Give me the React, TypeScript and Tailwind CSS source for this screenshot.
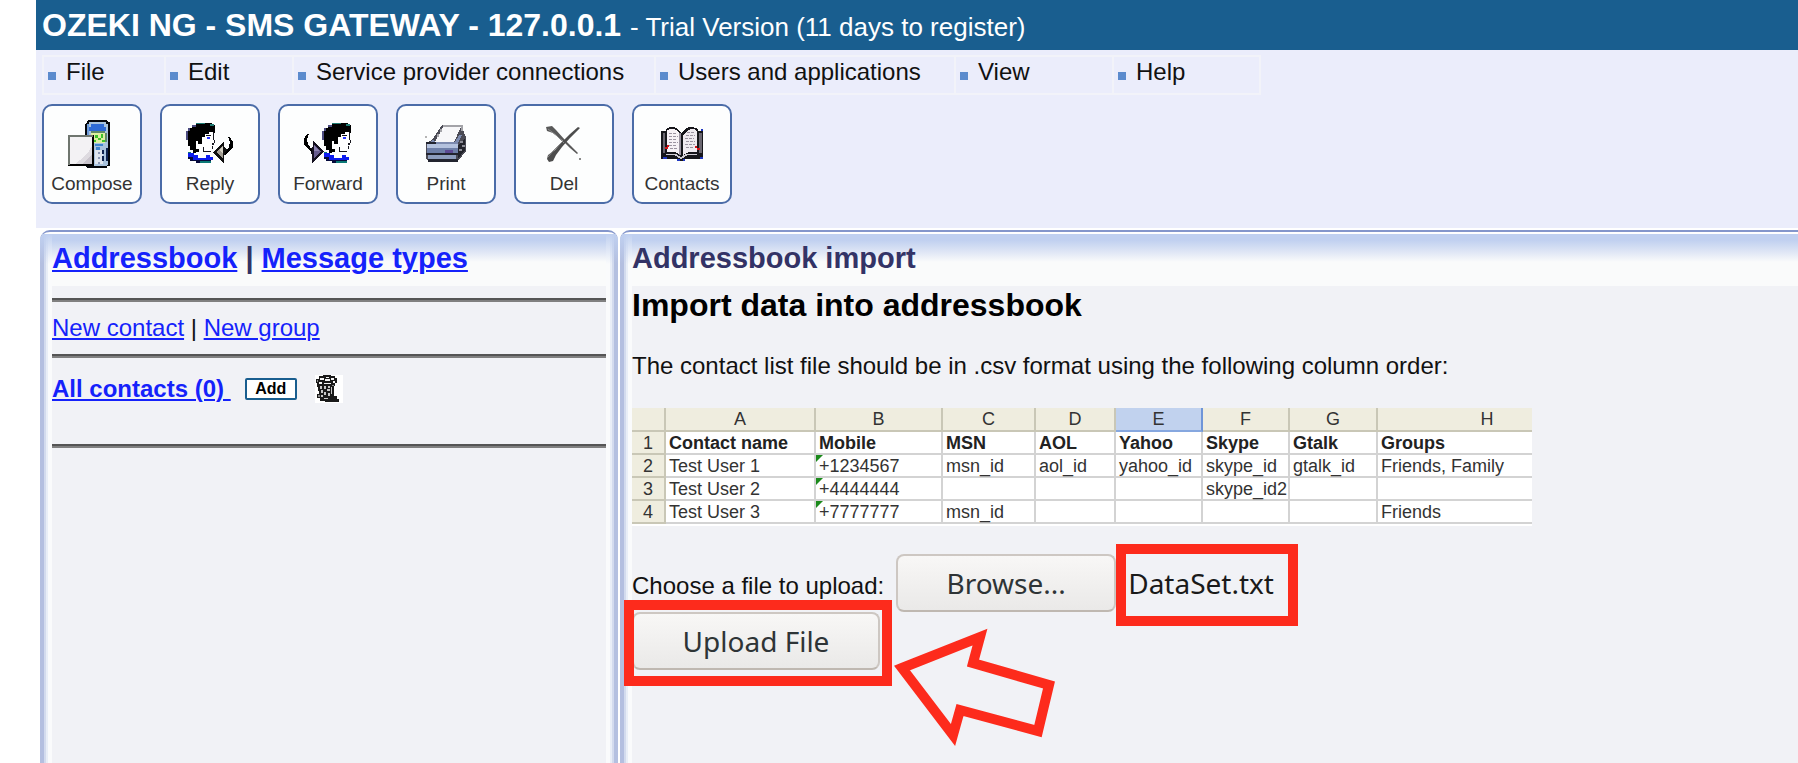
import { useRef, useState } from "react";
import type { ChangeEvent, ReactNode } from "react";

const menuItems = [
  { label: "File", width: "w-[122px]" },
  { label: "Edit", width: "w-[128px]" },
  { label: "Service provider connections", width: "w-[362px]" },
  { label: "Users and applications", width: "w-[300px]" },
  { label: "View", width: "w-[158px]" },
  { label: "Help", width: "w-[147px]" },
];

function ComposeIcon() {
  return (
    <svg width="48" height="48" viewBox="0 0 48 48" shapeRendering="crispEdges" aria-hidden="true">
      <path d="M20 0h18l2 2h2v44h-3v2H20l-3-2V4l2-2z" fill="#05070d" />
      <path d="M21 2h17v2h2v40l-2 2H22l-3-2V4h2z" fill="#a9c3de" />
      <path d="M23 4h13v3h2v4H21V7h2z" fill="#2f6bd6" />
      <path d="M19 4h2v11h-2z" fill="#6f9bd8" />
      <path d="M23 13h14v10H23z" fill="#dcf0a0" />
      <path d="M23 11h14v2H23zM37 13h2v9h-2z" fill="#5f8a68" />
      <path d="M27 15h3v3h-3zM33 14h2v4h-2zM30 18h3v2h-3zM34 20h3v2h-3zM26 20h2v2h-2z" fill="#3fc42a" />
      <path d="M27 24h8v2h-8zM28 27h4v3h-4z" fill="#3f86cf" />
      <path d="M27 30h8v14h-8z" fill="#dfe5ee" />
      <path d="M34 30h2v4h-2zM34 36h2v5h-2zM38 28h2v13h-2z" fill="#10234f" />
      <path d="M30 32h2v2h-2zM30 37h2v2h-2zM30 42h2v2h-2z" fill="#8b97b5" />
      <path d="M0 15h26v31H0z" fill="#000" />
      <path d="M0 15h25v2H2v28H0z" fill="#6f766f" />
      <path d="M2 17h22v27H2z" fill="#f3f2f4" />
      <path d="M24 26v18H7l5-4 7-6z" fill="#dedbe0" />
      <path d="M24 34v10h-9z" fill="#c8c3cb" />
    </svg>
  );
}

function Head() {
  return (
    <>
      <path d="M6 2h4V0h16v2h3v8h-6v3h-4v4h-3v8h-3v4h-3v1H7v-3H4v-4H2v-6H0V8h2V5h4z" fill="#000" />
      <path d="M0 8h2v9H0zM2 5h2v3H2zM6 2h4v2H6z" fill="#4b4b80" />
      <path d="M10 0h9v1h-9zM24 1h4v2h-4z" fill="#1f7a72" />
      <path d="M16 14h3v-3h4V9h4v8h2v3h-2v6h-3v3h-6v6h-6v-5h2v-4h-4v-8h2v3h4z" fill="#fff" />
      <path d="M27 9h1v8h-1zM28 17h1v3h-1zM26 20h2v2h-2zM26 23h1v3h-1zM18 28h7v1h-7zM17 24h1v5h-1z" fill="#17171f" />
      <path d="M21 14h3v2h-3z" fill="#2a35ff" />
      <path d="M20 12h5v1h-5z" fill="#111" />
      <path d="M2 30h6v2h4v3h8v-3h4v2h3v3H7v-3H2z" fill="#0d1cf0" />
      <path d="M2 34h5v3h18v3H10v-2H4v-2H2z" fill="#050a3c" />
      <path d="M14 38h11v2H14z" fill="#0b7a76" />
      <path d="M2 29h3v1H2z" fill="#0b7a76" />
    </>
  );
}

function ReplyIcon() {
  return (
    <svg width="48" height="42" viewBox="0 0 48 42" shapeRendering="crispEdges" aria-hidden="true">
      <Head />
      <path d="M27 29l11-10v5l4 3-4 6v8z" fill="#101010" />
      <path d="M30 29l7-6v12z" fill="#a49f94" />
      <path d="M33 27l4-4v7z" fill="#d6d2c6" />
      <path d="M42 14h2l3 5v5l-4 5-4 3v-2l4-6 1-5z" fill="#000" />
    </svg>
  );
}

function ForwardIcon() {
  return (
    <svg width="48" height="42" viewBox="0 0 48 42" shapeRendering="crispEdges" aria-hidden="true">
      <g transform="translate(18 0)">
        <Head />
      </g>
      <path d="M20 29L9 18v5l-3 3 2 6v8z" fill="#14101f" />
      <path d="M17 29l-7-7v13z" fill="#655a8c" />
      <path d="M15 28l-5-5v5z" fill="#8d83b0" />
      <path d="M5 11H3l-3 5v5l4 5 4 3v-2l-4-6-1-5z" fill="#000" />
    </svg>
  );
}

function PrintIcon() {
  return (
    <svg width="42" height="38" viewBox="0 0 42 38" shapeRendering="crispEdges" aria-hidden="true">
      <path d="M17 0h21v5l3 7v14l-8 10H3l-2-3V18l6-3z" fill="#4b4b55" />
      <path d="M18 2h18l-7 15H10z" fill="#f7f7f9" />
      <path d="M18 0h20v2H18zM15 4h2v3h-2zM12 9h2v3h-2zM36 2h2v4h-2z" fill="#a3a3a8" />
      <path d="M8 14l2 3h20l4-7h3l-5 10H2z" fill="#7c8aae" />
      <path d="M2 19h31v5H2z" fill="#b4c2de" />
      <path d="M2 23h31v5H2z" fill="#6e7fa8" />
      <path d="M3 30h28v4H3z" fill="#8d9dbd" />
      <path d="M1 28h32v2H1zM3 34h30v3H3zM1 17h10v2H1z" fill="#22242f" />
      <path d="M33 20l7-7v12l-7 9z" fill="#22232b" />
      <path d="M35 16h3v2h-3zM37 20h3v2h-3zM34 24h3v2h-3z" fill="#8e8e98" />
      <path d="M20 25h8v3h-8z" fill="#5b4a93" />
      <path d="M0 11h2v2H0z" fill="#b5b5b5" />
    </svg>
  );
}

function DelIcon() {
  return (
    <svg width="38" height="36" viewBox="0 0 38 36" aria-hidden="true">
      <path d="M1 1l6-1 4 4 9 10 6 6 7 7-1 1-7-6-7-7L8 7 2 5z" fill="#595959" />
      <path d="M33 1l2 1-10 10-8 9-6 8-3 6-4 1-2-3 1-4 7-5 7-8 8-8z" fill="#4d4d4d" />
      <path d="M3 31l5-6 9-9M3 3l8 6 8 8" stroke="#8a8a8a" strokeWidth="1" fill="none" />
      <path d="M34 32h2v2h-2z" fill="#8a8a8a" />
    </svg>
  );
}

function ContactsIcon() {
  return (
    <svg width="42" height="34" viewBox="0 0 42 34" shapeRendering="crispEdges" aria-hidden="true">
      <path d="M0 4h5V2l4-2h4l4 2 3 4 4-4 4-2h4l5 2v2h5v28H24v2h-7v-2H0z" fill="#16161b" />
      <path d="M6 3l3-1h4l4 2 3 4v20l-6-3H6z" fill="#f6f1f6" />
      <path d="M22 8l4-4 4-2h3l3 2v21h-8l-6 3z" fill="#efeaf0" />
      <path d="M2 6h2v20H2zM38 6h3v20h-3z" fill="#6b6771" />
      <path
        d="M8 6h7M8 9h9M8 12h8M8 15h9M8 18h7M9 21h8M25 8h9M24 11h9M25 14h9M24 17h10M25 20h8M26 5h7"
        stroke="#9b93a1"
        strokeWidth="1"
        strokeDasharray="3 1"
      />
      <path d="M18 6h2v22h-2z" fill="#9b93a1" />
      <path d="M5 27h10l5 3 5-3h11v1h-9l-7 4-7-4H5z" fill="#d0cdd4" />
      <path d="M6 18h2v2H6zM4 20h3v2H4zM34 19h2v2h-2zM36 21h3v2h-3z" fill="#d51016" />
      <path d="M40 2h2v2h-2zM2 30h4v2H2zM16 32h3v2h-3zM22 32h2v2h-2zM39 30h3v2h-3z" fill="#2038c0" />
    </svg>
  );
}

function TrashIcon() {
  return (
    <svg width="28" height="28" viewBox="0 0 28 28" shapeRendering="crispEdges" aria-hidden="true">
      <path d="M0 0h28v28H0z" fill="#fff" />
      <path d="M4 1h4V0h8v1h4v2h2v5h-2v3h-1v10h3v3h2v3H10v-1H5v-3H2v-4h2v-3H3v-4H2v-4H1V4h3z" fill="#1a1a1a" />
      <path d="M5 3h4v2H5zM11 2h3v1h-3zM10 4h5v2h-5zM16 3h3v2h-3zM4 7h3v2H4zM9 8h7v1H9zM18 6h2v2h-2z" fill="#f4f4f4" />
      <path
        d="M5 11h2v3H5zM9 11h2v3H9zM13 11h2v2h-2zM6 15h2v3H6zM12 14h3v2h-3zM16 12h1v7h-1zM9 17h2v3H9zM6 20h2v2H6zM13 18h2v3h-2zM9 23h4v1H9z"
        fill="#c9c9c9"
      />
      <path d="M3 20h2v2H3zM17 10h2v1h-2zM2 5h1v2H2z" fill="#8d8d8d" />
    </svg>
  );
}

function BigArrow() {
  return (
    <svg
      className="pointer-events-none absolute top-4 left-[261px]"
      width="165"
      height="119"
      viewBox="0 0 165 119"
      aria-hidden="true"
    >
      <path
        d="M9 40L87 9L80 35L156 57L145 103L67 82L60 107Z"
        fill="none"
        stroke="#fd2b1c"
        strokeWidth="10"
        strokeMiterlimit="10"
      />
    </svg>
  );
}

const tools = [
  { label: "Compose", icon: <ComposeIcon /> },
  { label: "Reply", icon: <ReplyIcon /> },
  { label: "Forward", icon: <ForwardIcon /> },
  { label: "Print", icon: <PrintIcon /> },
  { label: "Del", icon: <DelIcon /> },
  { label: "Contacts", icon: <ContactsIcon /> },
];

function Panel({ title, className, children }: { title: ReactNode; className: string; children: ReactNode }) {
  return (
    <section className={`flex overflow-hidden rounded-t-[10px] border-t-2 border-[#8496cb] bg-white pt-0.5 ${className}`}>
      <div className="w-3 shrink-0 bg-[linear-gradient(to_bottom,#c0d0f0,transparent_30px),linear-gradient(to_right,#b4bfe0_4px,#d3dbee_4px,#d3dbee_6px,#e9eef7_6px,#e9eef7_8px,#fafbfc_8px)]" />
      <div className="min-w-0 flex-1 bg-[#f1f2f6]">
        <h2 className="h-[52px] bg-[linear-gradient(to_bottom,#c0d0f0_6px,#dfe6f5_18px,#fafbfb_28px)] text-[29px] leading-[48px] font-bold whitespace-nowrap text-[#333366]">
          {title}
        </h2>
        {children}
      </div>
      <div className="w-3 shrink-0 bg-[linear-gradient(to_bottom,#c0d0f0,transparent_30px),linear-gradient(to_left,#b4c0e0_4px,#d3dbee_4px,#d3dbee_6px,#e9eef7_6px,#e9eef7_8px,#fafbfc_8px)]" />
    </section>
  );
}

function Rule() {
  return <hr className="h-1 border-t-2 border-b-2 border-t-[#555555] border-b-[#808080]" />;
}

const columns = [
  { letter: "A", width: "w-[150px]" },
  { letter: "B", width: "w-[127px]" },
  { letter: "C", width: "w-[93px]" },
  { letter: "D", width: "w-[80px]" },
  { letter: "E", width: "w-[87px]" },
  { letter: "F", width: "w-[87px]" },
  { letter: "G", width: "w-[88px]" },
  { letter: "H", width: "w-[220px]" },
];

const rows = [
  ["Contact name", "Mobile", "MSN", "AOL", "Yahoo", "Skype", "Gtalk", "Groups"],
  ["Test User 1", "+1234567", "msn_id", "aol_id", "yahoo_id", "skype_id", "gtalk_id", "Friends, Family"],
  ["Test User 2", "+4444444", "", "", "", "skype_id2", "", ""],
  ["Test User 3", "+7777777", "msn_id", "", "", "", "", "Friends"],
];

function SampleSheet() {
  return (
    <div className="mt-[27px] h-[118px] max-w-[900px] overflow-hidden bg-white">
      <table className="w-[966px] table-fixed border-separate border-spacing-0 text-[18px] leading-5 whitespace-nowrap text-[#333]">
        <thead>
          <tr>
            <th className="h-6 w-[34px] border-r-2 border-b-2 border-[#c9c7b6] bg-[#efeddf] p-0" />
            {columns.map((c) => (
              <th
                key={c.letter}
                className={`h-6 border-r-2 border-b-2 p-0 font-normal ${c.width} ${
                  c.letter === "E" ? "border-r-[#6f95d8] border-b-[#86a7df] bg-[#c1d2ee]" : "border-[#c9c7b6] bg-[#efeddf]"
                }`}
              >
                {c.letter}
              </th>
            ))}
          </tr>
        </thead>
        <tbody>
          {rows.map((row, r) => (
            <tr key={r}>
              <th className="h-[23px] border-r-2 border-b-2 border-[#c9c7b6] bg-[#efeddf] p-0 font-normal">{r + 1}</th>
              {row.map((cell, i) => (
                <td
                  key={i}
                  className={`relative h-[23px] border-r-2 border-b-2 border-[#d3d3d3] p-0 pl-[3px] ${r === 0 ? "font-bold text-[#222]" : ""}`}
                >
                  {cell}
                  {r > 0 && i === 1 && (
                    <span className="absolute top-0 left-0 size-[7px] bg-[#1b8a1b] [clip-path:polygon(0_0,100%_0,0_100%)]" />
                  )}
                </td>
              ))}
            </tr>
          ))}
        </tbody>
      </table>
    </div>
  );
}

const gtkButton =
  "h-[58px] rounded-lg border-2 border-[#cdc7c2] border-b-[#bfb8b1] bg-linear-to-b from-[#f8f7f6] to-[#eae9e8] font-['Noto_Sans',sans-serif] text-[28px] leading-[54px] text-[#2e3436]";

function UploadForm() {
  const input = useRef<HTMLInputElement>(null);
  const [fileName, setFileName] = useState("DataSet.txt");
  const onPick = (e: ChangeEvent<HTMLInputElement>) => {
    const file = e.target.files?.[0];
    if (file) setFileName(file.name);
  };
  return (
    <form className="mt-7 whitespace-nowrap" onSubmit={(e) => e.preventDefault()}>
      <div className="flex items-baseline">
        <label htmlFor="upload" className="mr-3">
          Choose a file to upload:
        </label>
        <input ref={input} id="upload" type="file" className="hidden" onChange={onPick} />
        <button type="button" className={`w-[220px] ${gtkButton}`} onClick={() => input.current?.click()}>
          Browse...
        </button>
        <span className="relative pl-3 font-['Noto_Sans',sans-serif] text-[28px] leading-[58px] text-[#1a1a1a]">
          {fileName}
          <span className="pointer-events-none absolute -top-2.5 -right-6 bottom-[-14px] left-0 border-10 border-[#fd2b1c]" />
        </span>
      </div>
      <div className="relative w-fit">
        <button type="submit" className={`w-[248px] ${gtkButton}`}>
          Upload File
        </button>
        <span className="pointer-events-none absolute -top-3 -right-3 -bottom-4 -left-2 border-10 border-[#fd2b1c]" />
        <BigArrow />
      </div>
    </form>
  );
}

const link = "text-[#1522fb] underline decoration-2 underline-offset-2";

export default function App() {
  return (
    <div className="flex min-h-screen flex-col overflow-hidden bg-white pl-9 font-['Liberation_Sans',Arial,sans-serif] text-[24px] leading-[30px] text-[#111]">
      <header className="bg-[#ebedfb]">
        <h1 className="h-[50px] bg-[#195e8f] pl-1.5 text-[32px] leading-[50px] font-bold whitespace-nowrap text-white">
          OZEKI NG - SMS GATEWAY - 127.0.0.1 <span className="text-[26px] font-normal">- Trial Version (11 days to register)</span>
        </h1>
        <nav className="px-1.5 pt-[5px]">
          <ul className="flex h-10 w-fit border-2 border-r-0 border-[#f2f3f9]">
            {menuItems.map((m) => (
              <li key={m.label} className={`border-r-2 border-[#f2f3f9] pl-1 ${m.width}`}>
                <button type="button" className="flex items-baseline gap-2.5 whitespace-nowrap">
                  <span className="size-2 bg-[#5b8bcd]" />
                  {m.label}
                </button>
              </li>
            ))}
          </ul>
        </nav>
        <div className="flex gap-[18px] px-1.5 pt-[9px] pb-6">
          {tools.map((t) => (
            <button
              key={t.label}
              type="button"
              className="flex size-[100px] flex-col items-center rounded-[10px] border-2 border-[#4b6ca8] bg-[#fdfefe] text-[19px] leading-5 text-[#333]"
            >
              <span className="flex h-[68px] items-center pt-2">{t.icon}</span>
              {t.label}
            </button>
          ))}
        </div>
      </header>
      <main className="flex flex-1 gap-0.5 pt-0.5 pl-1">
        <Panel
          className="w-[578px] shrink-0"
          title={
            <>
              <a href="#addressbook" className={link}>
                Addressbook
              </a>{" "}
              |{" "}
              <a href="#types" className={link}>
                Message types
              </a>
            </>
          }
        >
          <div className="pt-3 whitespace-nowrap">
            <Rule />
            <p className="leading-[52px]">
              <a href="#new-contact" className={link}>
                New contact
              </a>{" "}
              |{" "}
              <a href="#new-group" className={link}>
                New group
              </a>
            </p>
            <Rule />
            <div className="flex h-[86px] items-center pb-6">
              <a href="#all" className={`mr-3.5 font-bold whitespace-pre ${link}`}>
                {"All contacts (0) "}
              </a>
              <button
                type="button"
                className="mr-[18px] h-[22px] w-[52px] rounded-xs border-2 border-[#195e8f] bg-white text-[16px] leading-[18px] font-bold text-black"
              >
                Add
              </button>
              <button type="button" aria-label="Delete contacts">
                <TrashIcon />
              </button>
            </div>
            <Rule />
          </div>
        </Panel>
        <Panel className="-mr-3 min-w-0 flex-1" title="Addressbook import">
          <h3 className="text-[32px] leading-[38px] font-bold whitespace-nowrap text-black">Import data into addressbook</h3>
          <p className="mt-[27px] whitespace-nowrap">The contact list file should be in .csv format using the following column order:</p>
          <SampleSheet />
          <UploadForm />
        </Panel>
      </main>
    </div>
  );
}
